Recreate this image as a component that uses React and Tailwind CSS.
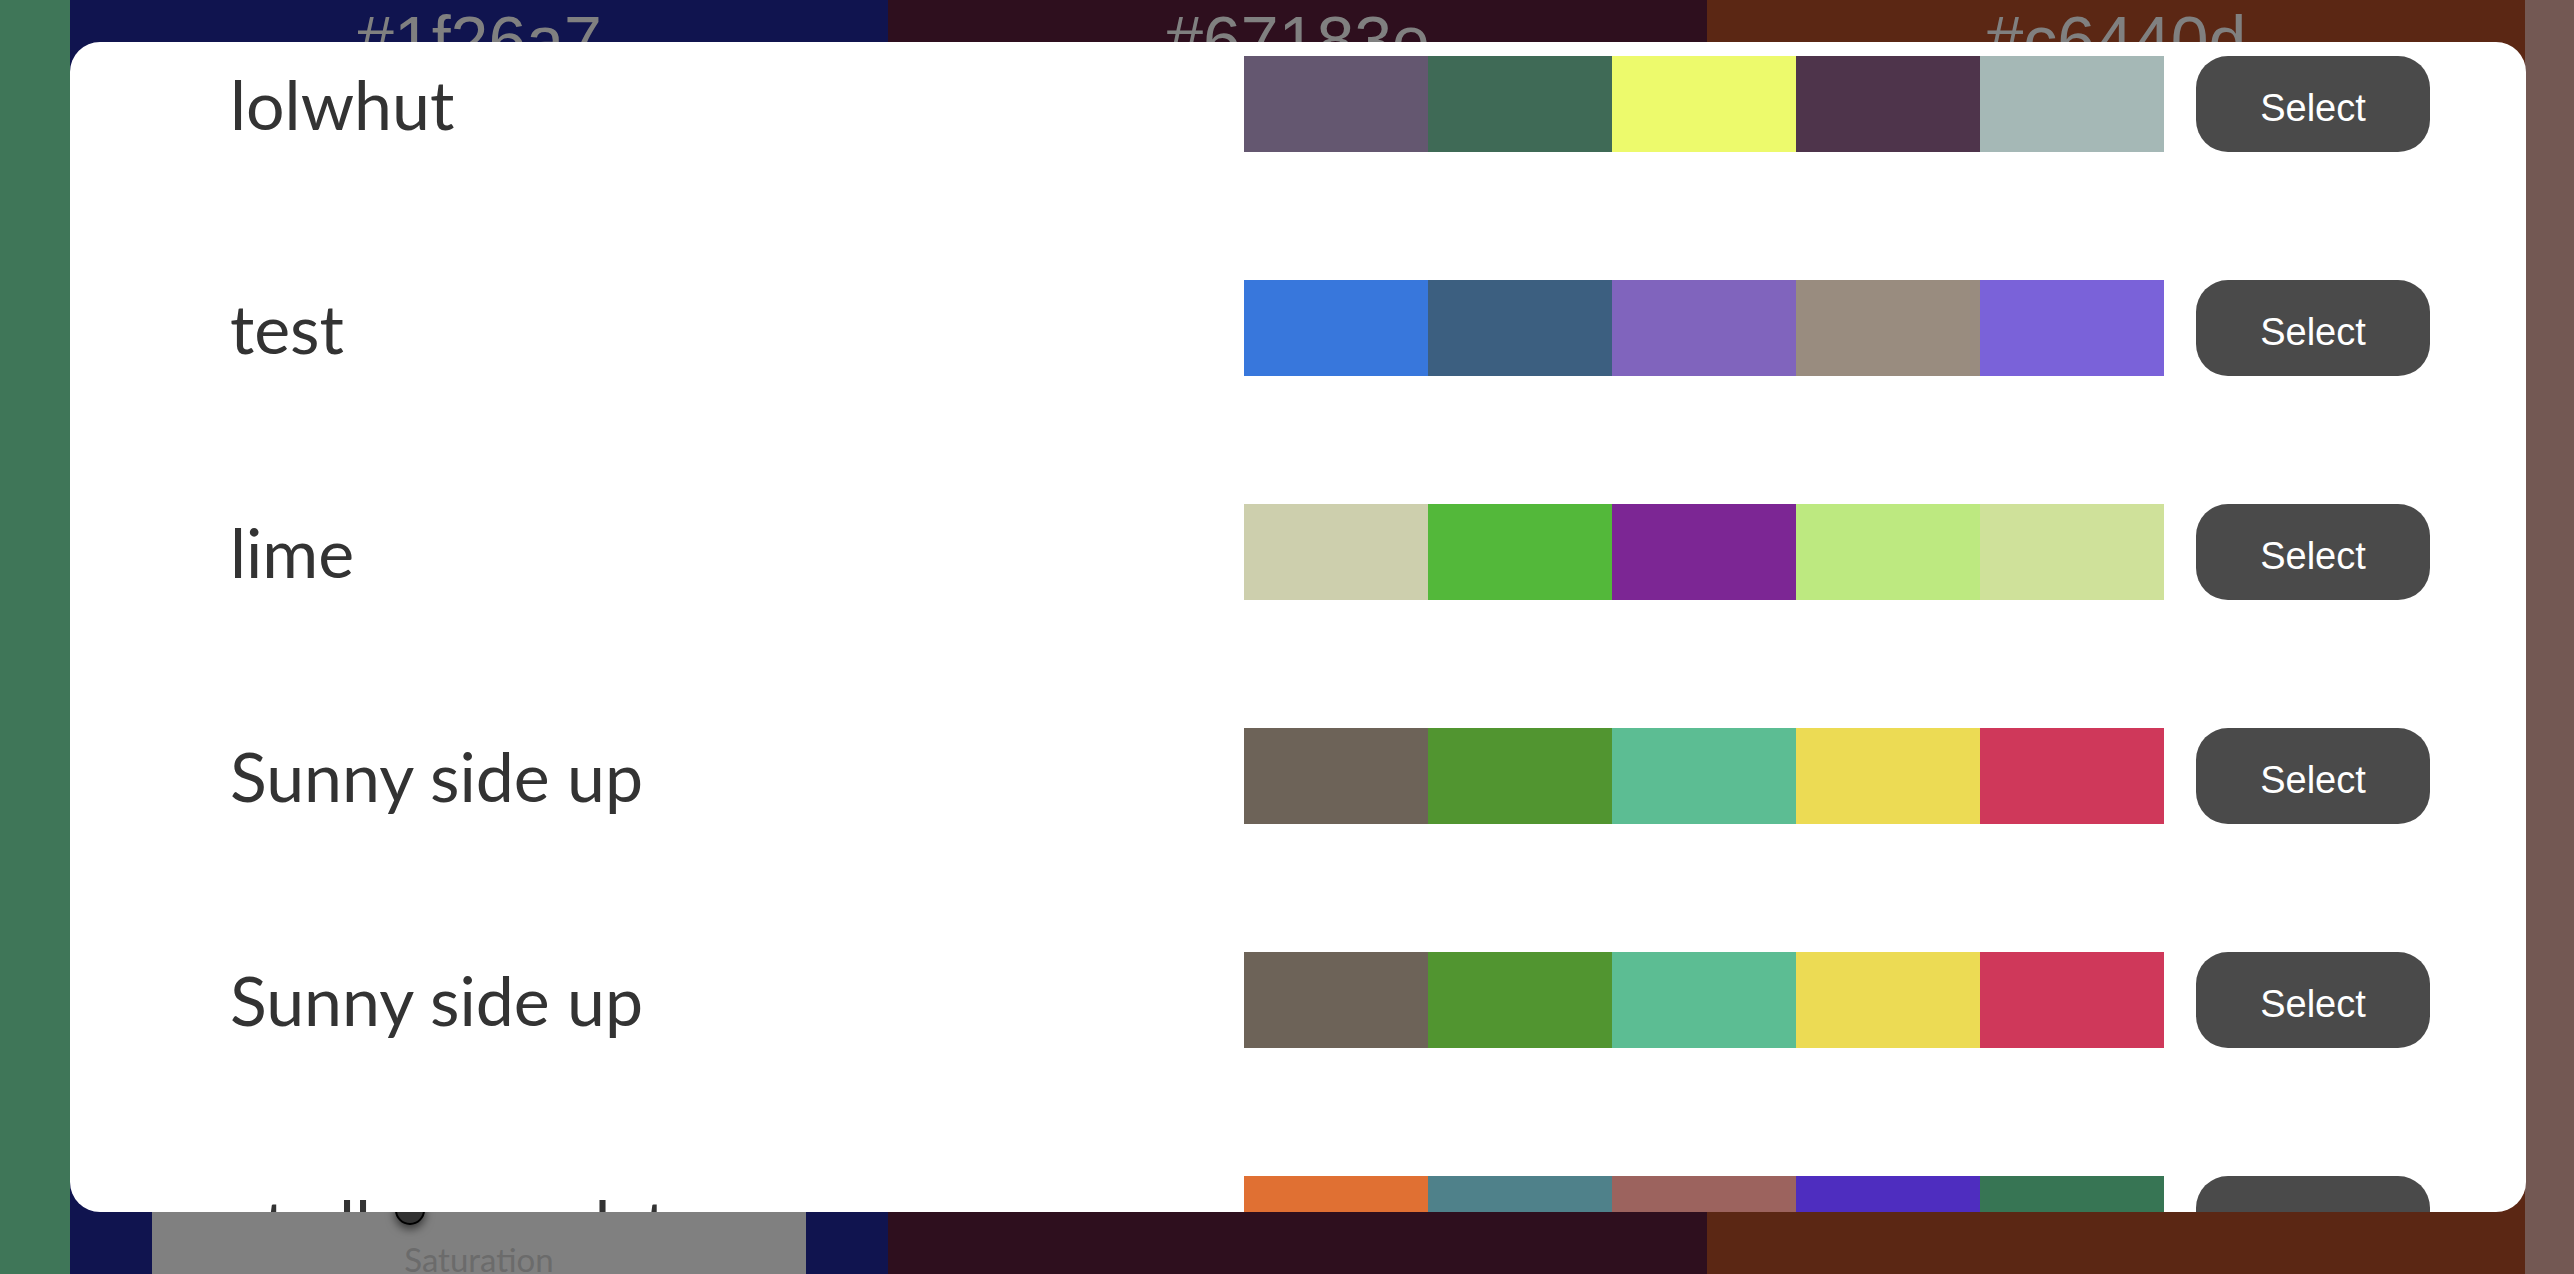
import React from "react";

const palettes = [
  { name: "lolwhut", colors: ["#645770", "#3f6a56", "#edfa6c", "#4e344b", "#a5b8b6"] },
  { name: "test", colors: ["#3877dc", "#3c5f80", "#8064bd", "#998c7f", "#7a62d9"] },
  { name: "lime", colors: ["#cdcfad", "#53b83a", "#7c2694", "#bde980", "#cfe19a"] },
  { name: "Sunny side up", colors: ["#6d6358", "#519530", "#5cbd93", "#ecdb54", "#cf385a"] },
  { name: "Sunny side up", colors: ["#6d6358", "#519530", "#5cbd93", "#ecdb54", "#cf385a"] },
  { name: "at all never data", colors: ["#e07033", "#4f818a", "#9c635e", "#4e2dbf", "#377554"] },
];

function PaletteRow({ palette }) {
  return (
    <div className="flex items-center h-[96px] shrink-0">
      <div className="flex-1 pl-[160px] text-[68px] leading-none text-[#333333] font-['Lato','Noto_Sans',sans-serif] whitespace-nowrap">
        {palette.name}
      </div>
      <div className="flex w-[920px] h-[96px]">
        {palette.colors.map((c, i) => (
          <div key={i} className="flex-1 h-full" style={{ backgroundColor: c }} />
        ))}
      </div>
      <button className="ml-[32px] mr-[96px] w-[234px] h-[96px] pt-[8px] rounded-[32px] bg-[#4a4a4a] text-white text-[38px] leading-none font-['Liberation_Sans',Arial,sans-serif]">
        Select
      </button>
    </div>
  );
}

export default function App() {
  return (
    <div className="relative w-[2574px] h-[1274px] overflow-hidden">
      <div className="grid grid-cols-[70px_818px_819px_818px_1fr] h-full">
        <div className="bg-[#3f7658]" />
        <div className="bg-[#10144f] flex flex-col items-center">
          <div className="pt-[6px] text-[68px] leading-none text-[#808080] font-['Liberation_Sans',Arial,sans-serif]">
            #1f26a7
          </div>
          <div className="mt-auto w-[654px] h-[90px] bg-[#808080] flex flex-col justify-end items-center">
            <span className="-mb-[2px] text-[33px] leading-none text-[#6b6b6b] font-['Lato','Noto_Sans',sans-serif]">
              Saturation
            </span>
          </div>
        </div>
        <div className="bg-[#2e0f1e] flex flex-col items-center">
          <div className="pt-[6px] text-[68px] leading-none text-[#808080] font-['Liberation_Sans',Arial,sans-serif]">
            #67183e
          </div>
        </div>
        <div className="bg-[#5b2714] flex flex-col items-center">
          <div className="pt-[6px] text-[68px] leading-none text-[#808080] font-['Liberation_Sans',Arial,sans-serif]">
            #c6440d
          </div>
        </div>
        <div className="bg-[#735853]" />
      </div>

      {/* slider knob peeking out under the modal */}
      <div className="absolute left-[395px] top-[1195px] w-[30px] h-[30px] rounded-full bg-[#333333] border-2 border-black shadow-[0_4px_10px_rgba(0,0,0,0.6)]" />

      {/* palette picker modal */}
      <div className="absolute left-[70px] top-[42px] w-[2456px] h-[1170px] bg-white rounded-[30px] overflow-hidden">
        <div className="flex flex-col gap-[128px] pt-[14px]">
          {palettes.map((p, i) => (
            <PaletteRow key={i} palette={p} />
          ))}
        </div>
      </div>
    </div>
  );
}
